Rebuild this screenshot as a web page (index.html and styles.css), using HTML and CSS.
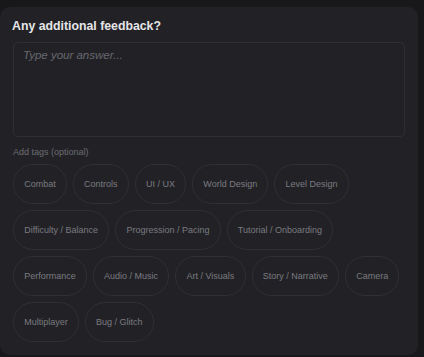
FILE: index.html
```html
<!DOCTYPE html>
<html lang="en">

<head>
    <meta charset="UTF-8">
    <meta name="viewport" content="width=device-width, initial-scale=1.0">
    <title>Feedback</title>
    <link rel="stylesheet" href="styles.css">
</head>

<body>
    <div class="card">
        <h2 class="card_title">Any additional feedback?</h2>
        <textarea class="answer" placeholder="Type your answer..."></textarea>
        <div class="tags_label">Add tags (optional)</div>
        <ul class="tags">
            <li>Combat</li>
            <li>Controls</li>
            <li>UI / UX</li>
            <li>World Design</li>
            <li>Level Design</li>
            <li>Difficulty / Balance</li>
            <li>Progression / Pacing</li>
            <li>Tutorial / Onboarding</li>
            <li>Performance</li>
            <li>Audio / Music</li>
            <li>Art / Visuals</li>
            <li>Story / Narrative</li>
            <li>Camera</li>
            <li>Multiplayer</li>
            <li>Bug / Glitch</li>
        </ul>
    </div>
</body>

</html>
```

FILE: styles.css
```css
body {
    margin: 0;
    background: #18181a;
    font-family: "Liberation Sans", Arial, sans-serif;
}

.card {
    margin-top: 7px;
    width: 418px;
    height: 348px;
    box-sizing: border-box;
    padding: 12px 13px 12px 13px;
    background: #222226;
    border-radius: 10px;
}

.card_title {
    margin: 0 0 8px -1px;
    font-size: 12.3px;
    line-height: 15px;
    font-weight: bold;
    color: #e6e6e8;
}

.answer {
    display: block;
    width: 392px;
    height: 95px;
    box-sizing: border-box;
    margin: 0;
    padding: 5px 9px;
    background: #222226;
    border: 1px solid #2e2e34;
    border-radius: 5px;
    resize: none;
    outline: none;
    font: italic 11.5px/15px "Liberation Sans", Arial, sans-serif;
    color: #ccc;
}

.answer::placeholder {
    color: #68686f;
}

.tags_label {
    margin: 9px 0 6px;
    font-size: 9px;
    line-height: 12px;
    color: #6c6c72;
}

.tags {
    margin: 0;
    padding: 0;
    list-style: none;
    display: flex;
    flex-wrap: wrap;
    gap: 6px;
}

.tags li {
    height: 40px;
    box-sizing: border-box;
    padding: 0 10.2px;
    display: flex;
    align-items: center;
    border: 1px solid #2f2f34;
    border-radius: 20px;
    font-size: 9px;
    color: #7a7a80;
}
```
